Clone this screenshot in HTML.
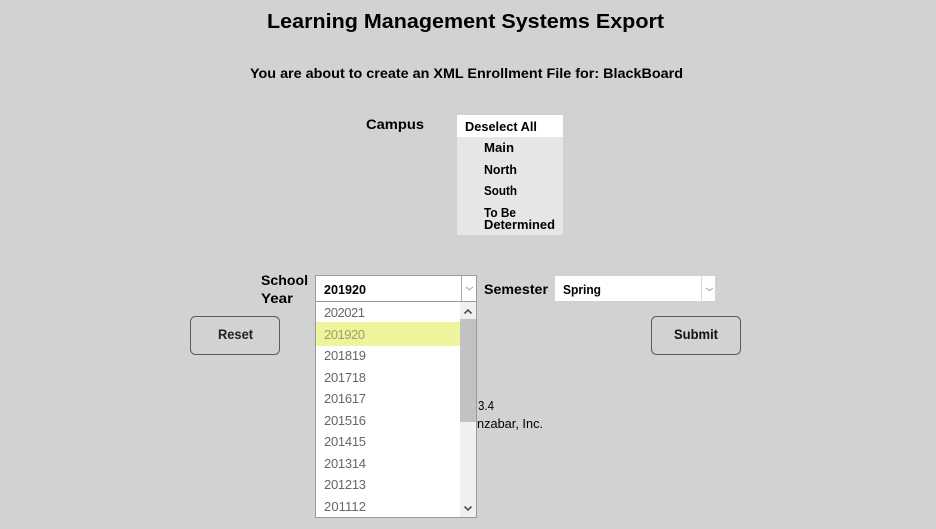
<!DOCTYPE html>
<html><head><meta charset="utf-8"><style>
html,body{margin:0;padding:0;width:936px;height:529px;overflow:hidden;background:#d2d2d2}
svg{display:block}
text{font-family:"Liberation Sans",sans-serif;fill:#000}
.b{font-weight:bold}
.i{font-size:13px;fill:#666}
.m{font-size:13px;font-weight:bold;fill:#000}
</style></head><body>
<svg width="936" height="529" viewBox="0 0 936 529" xmlns="http://www.w3.org/2000/svg">
<rect width="936" height="529" fill="#d2d2d2"/>
<text class="b" x="267" y="28" font-size="20" textLength="397" lengthAdjust="spacingAndGlyphs">Learning Management Systems Export</text>
<text class="b" x="250" y="78" font-size="13.5" textLength="433" lengthAdjust="spacingAndGlyphs">You are about to create an XML Enrollment File for: BlackBoard</text>
<text class="b" x="366" y="129" font-size="13.5" textLength="58" lengthAdjust="spacingAndGlyphs">Campus</text>

<rect x="457" y="115" width="106" height="120" fill="#e6e6e6"/>
<rect x="457" y="115" width="106" height="22" fill="#fff"/>
<text class="m" x="465" y="131" textLength="72" lengthAdjust="spacingAndGlyphs">Deselect All</text>
<text class="m" x="484" y="152" textLength="30" lengthAdjust="spacingAndGlyphs">Main</text>
<text class="m" x="484" y="174" textLength="33" lengthAdjust="spacingAndGlyphs">North</text>
<text class="m" x="484" y="195" textLength="33" lengthAdjust="spacingAndGlyphs">South</text>
<text class="m" x="484" y="217" textLength="32" lengthAdjust="spacingAndGlyphs">To Be</text>
<text class="m" x="484" y="229" textLength="71" lengthAdjust="spacingAndGlyphs">Determined</text>

<text class="b" x="261" y="285" font-size="13.5" textLength="47" lengthAdjust="spacingAndGlyphs">School</text>
<text class="b" x="261" y="303" font-size="13.5" textLength="32" lengthAdjust="spacingAndGlyphs">Year</text>

<text x="478" y="410" font-size="12.5" textLength="16" lengthAdjust="spacingAndGlyphs">3.4</text>
<text x="477" y="428" font-size="12.5" textLength="66" lengthAdjust="spacingAndGlyphs">nzabar, Inc.</text>

<rect x="190.5" y="316.5" width="89" height="38" rx="5" fill="none" stroke="#5c5c5c"/>
<text class="b" x="218" y="339" font-size="13.5" textLength="35" lengthAdjust="spacingAndGlyphs" style="fill:#222">Reset</text>
<rect x="651.5" y="316.5" width="89" height="38" rx="5" fill="none" stroke="#5c5c5c"/>
<text class="b" x="674" y="339" font-size="13.5" textLength="44" lengthAdjust="spacingAndGlyphs" style="fill:#111">Submit</text>

<!-- school year select -->
<rect x="315.5" y="275.5" width="161" height="26" fill="#fff" stroke="#999"/>
<path d="M461.5 276v25" stroke="#aaa"/>
<path d="M466 287l3.500 3 3.500-3" fill="none" stroke="#b5b5b5" stroke-width="1.200"/>
<text class="m" x="324" y="294" textLength="42" lengthAdjust="spacingAndGlyphs">201920</text>

<text class="b" x="484" y="294" font-size="13.500" textLength="64" lengthAdjust="spacingAndGlyphs">Semester</text>
<rect x="555" y="276" width="160" height="25" fill="#fff"/>
<path d="M701.500 276v25" stroke="#d8d8d8"/>
<path d="M706 288l3.500 2.500 3.500-2.500" fill="none" stroke="#b5b5b5" stroke-width="1.200"/>
<text class="m" x="563" y="294" textLength="38" lengthAdjust="spacingAndGlyphs">Spring</text>

<!-- dropdown list -->
<rect x="315.500" y="301.500" width="161" height="216" fill="#fff" stroke="#999"/>
<rect x="460" y="302" width="16" height="215" fill="#f0f0f0"/>
<rect x="460" y="319" width="16" height="103" fill="#c2c2c2"/>
<path d="M464.500 313.500l3.500-3.500 3.500 3.500" fill="none" stroke="#505050" stroke-width="1.600"/>
<path d="M464.500 506.500l3.500 3.500 3.500-3.500" fill="none" stroke="#505050" stroke-width="1.600"/>
<rect x="316" y="322" width="144" height="24" fill="#eef49b"/>
<text class="i" x="324" y="317" textLength="41">202021</text>
<text class="i" x="324" y="339" textLength="41" style="fill:#9a9f68">201920</text>
<text class="i" x="324" y="360" textLength="42">201819</text>
<text class="i" x="324" y="382" textLength="42">201718</text>
<text class="i" x="324" y="403" textLength="42">201617</text>
<text class="i" x="324" y="425" textLength="42">201516</text>
<text class="i" x="324" y="446" textLength="42">201415</text>
<text class="i" x="324" y="468" textLength="42">201314</text>
<text class="i" x="324" y="489" textLength="42">201213</text>
<text class="i" x="324" y="511" textLength="42">201112</text>
</svg>
</body></html>
